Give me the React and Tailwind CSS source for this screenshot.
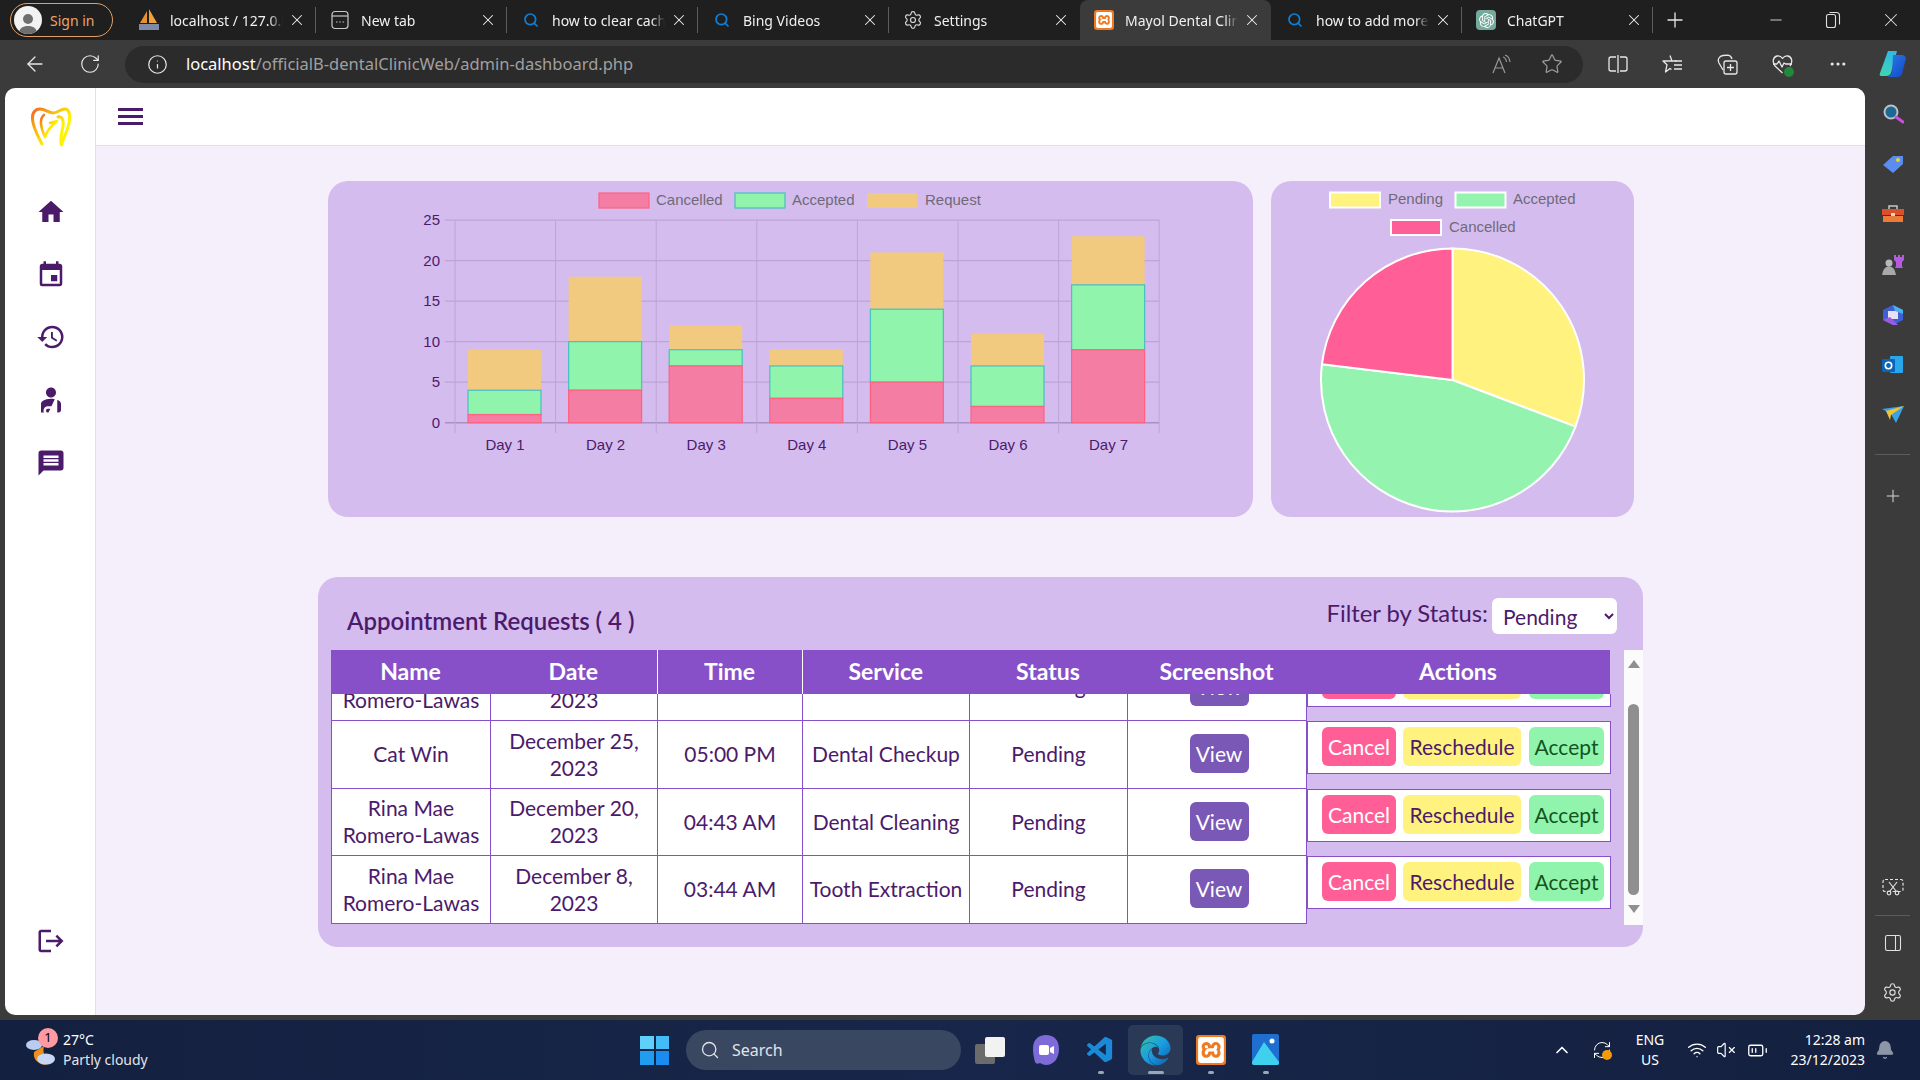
import { ArrowLeft, RotateCw, Info, Star, X, Plus, Search, Settings, Minus, ChevronUp, Wifi, VolumeX, BatteryMedium, RefreshCw, Bell, MoreHorizontal, PanelRight } from 'lucide-react';
import { MdHome, MdEvent, MdHistory, MdPersonalInjury, MdMessage, MdLogout } from 'react-icons/md';
import { SiXampp, SiOpenai } from 'react-icons/si';
import { FaEdge } from 'react-icons/fa';
import { VscVscode } from 'react-icons/vsc';

// ---- browser chrome ----

function PmaIcon() {
  return (
    <svg width="22" height="24" viewBox="0 0 22 24">
      <path d="M2 15 L9 3 L9 15 Z" fill="#e8922e" />
      <path d="M11 1 L19 15 L11 15 Z" fill="#f0a23a" />
      <rect x="1" y="16" width="20" height="6" fill="#7d8aa8" />
    </svg>
  );
}

function NewTabIcon() {
  return (
    <svg width="18" height="20" viewBox="0 0 18 20" fill="none" stroke="#c8c8c8" strokeWidth="1.2">
      <rect x="1" y="1.5" width="16" height="17" rx="3" />
      <path d="M1 6h16" />
      <path d="M5 12h1.5M8.3 12h1.5M11.6 12h1.5" />
    </svg>
  );
}

function BingIcon() {
  return <Search size={16} strokeWidth={2.6} className="text-[#0f7fd6]" />;
}

function XamppIcon({ size = 20 }) {
  return (
    <div className="flex items-center justify-center rounded-[3px] bg-[#ef7a22]" >
      <SiXampp size={size} className="p-[2px] text-white" />
    </div>
  );
}

const tabs = [
  { title: 'localhost / 127.0.0.1', icon: <PmaIcon /> },
  { title: 'New tab', icon: <NewTabIcon /> },
  { title: 'how to clear cache', icon: <BingIcon /> },
  { title: 'Bing Videos', icon: <BingIcon /> },
  { title: 'Settings', icon: <Settings size={20} strokeWidth={1.4} className="text-[#d8d8d8]" /> },
  { title: 'Mayol Dental Clinic', icon: <XamppIcon />, active: true },
  { title: 'how to add more', icon: <BingIcon /> },
  { title: 'ChatGPT', icon: <div className="flex h-[20px] w-[20px] items-center justify-center rounded-[4px] bg-[#74aa9c]"><SiOpenai size={15} className="text-white" /></div> },
];

function Tab({ title, icon, active, hideSep }) {
  return (
    <div className={`relative flex h-[40px] w-[191px] shrink-0 items-center pl-[13px] ${active ? 'rounded-t-[8px] bg-[#3b3b3b]' : ''}`}>
      <div className="flex w-[22px] shrink-0 items-center justify-center">{icon}</div>
      <div className="ml-[10px] w-[113px] overflow-hidden whitespace-nowrap text-[14px] text-[#f0f0f0] [mask-image:linear-gradient(to_right,black_88%,transparent)]">{title}</div>
      <div className="flex w-[28px] justify-center"><X size={18} strokeWidth={1.4} className="text-[#f0f0f0]" /></div>
      {!active && !hideSep && <div className="absolute right-0 top-[7px] h-[26px] w-px bg-[#5c5c5c]" />}
    </div>
  );
}

function RestoreIcon() {
  return (
    <svg width="16" height="18" viewBox="0 0 16 18" fill="none" stroke="#e0e0e0" strokeWidth="1.1">
      <rect x="1.5" y="3.5" width="9" height="13" rx="2" />
      <path d="M4.5 1.5h7a3 3 0 0 1 3 3v9" />
    </svg>
  );
}

function TabStrip() {
  return (
    <div className="flex h-[40px] items-center bg-[#1f1f1f]">
      <div className="ml-[10px] flex h-[34px] w-[103px] items-center rounded-full border border-[#e3a066] pl-[3px]">
        <div className="flex h-[28px] w-[28px] items-end justify-center overflow-hidden rounded-full bg-[#f2f2f2]">
          <svg width="22" height="24" viewBox="0 0 22 24" fill="#6e6e6e"><circle cx="11" cy="9" r="5" /><path d="M2 24c0-6 4-8 9-8s9 2 9 8z" /></svg>
        </div>
        <span className="ml-[8px] text-[14px] text-[#eba46a]">Sign in</span>
      </div>
      <div className="ml-[12px] flex">
        {tabs.map((t, i) => <Tab key={i} {...t} hideSep={i === 4} />)}
      </div>
      <Plus size={24} strokeWidth={1.3} className="ml-[10px] text-[#e8e8e8]" />
      <div className="ml-auto flex items-center">
        <div className="flex w-[57px] justify-center"><Minus size={18} strokeWidth={1.2} className="text-[#e0e0e0]" /></div>
        <div className="flex w-[58px] justify-center"><RestoreIcon /></div>
        <div className="flex w-[58px] justify-center"><X size={22} strokeWidth={1.1} className="text-[#e0e0e0]" /></div>
      </div>
    </div>
  );
}

function ReadAloudIcon() {
  return (
    <svg width="20" height="20" viewBox="0 0 20 20" fill="none" stroke="#9a9a9a" strokeWidth="1.2">
      <path d="M1 19 L7 4 L13 19 M3.2 14h7.6" />
      <path d="M11 3 Q14 4 14.5 8 M13 1 Q17.5 2.5 18 8" />
    </svg>
  );
}

function SplitIcon() {
  return (
    <svg width="20" height="20" viewBox="0 0 20 20" fill="none" stroke="#e8e8e8" strokeWidth="1.3">
      <path d="M8 3H3a2 2 0 0 0-2 2v10a2 2 0 0 0 2 2h5M12 3h5a2 2 0 0 1 2 2v10a2 2 0 0 1-2 2h-5M10 1v18" />
    </svg>
  );
}

function FavoritesIcon() {
  return (
    <svg width="21" height="20" viewBox="0 0 21 20" fill="none" stroke="#e8e8e8" strokeWidth="1.3" strokeLinejoin="round">
      <path d="M8 1.5 L10 7 H14 H1 L5 10.7 L3.5 18 L8 14.5 L9.5 15.5 M14 7" />
      <path d="M13 7h7M12 11h8M12 15h8" />
    </svg>
  );
}

function CollectionsIcon() {
  return (
    <svg width="21" height="21" viewBox="0 0 21 21" fill="none" stroke="#e8e8e8" strokeWidth="1.3">
      <path d="M6 16 L2 9 Q0.6 6 2 4 Q3 1.8 6 1.5 L11 1.2 Q14 1.5 15 5" />
      <rect x="7" y="7" width="13" height="13" rx="2" />
      <path d="M13.5 10v7M10 13.5h7" />
    </svg>
  );
}

function HealthIcon() {
  return (
    <div className="relative">
      <svg width="21" height="21" viewBox="0 0 21 21" fill="none" stroke="#e8e8e8" strokeWidth="1.3" strokeLinejoin="round">
        <path d="M10.5 19 L3 12 C0 8 1 3 5 2 C8 1.5 9.5 3 10.5 4.5 C11.5 3 13 1.5 16 2 C20 3 21 8 18 12" />
        <path d="M1 10h4l2-3 3 6 2-4 1.5 1H20" />
      </svg>
      <div className="absolute -bottom-[2px] -right-[1px] h-[10px] w-[10px] rounded-full bg-[#1f8a3c]" />
    </div>
  );
}

function CopilotIcon() {
  return (
    <svg width="30" height="30" viewBox="0 0 30 30">
      <defs>
        <linearGradient id="cp1" x1="0" y1="0" x2="0" y2="1"><stop offset="0" stopColor="#2fb8e8" /><stop offset="1" stopColor="#3fd6b0" /></linearGradient>
        <linearGradient id="cp2" x1="0" y1="0" x2="1" y2="1"><stop offset="0" stopColor="#2a7de8" /><stop offset="1" stopColor="#1347c8" /></linearGradient>
      </defs>
      <path d="M10 2 H19 L13 24 Q12 27 8 27 H3 Q1 27 2 24 Z" fill="url(#cp1)" />
      <path d="M15 6 H24 Q27 6 28 9 L24 25 Q23 28 20 28 H9 Q13 27 14 23 Z" fill="url(#cp2)" />
    </svg>
  );
}

function ToolbarIcon({ children }) {
  return <div className="flex w-[55px] justify-center">{children}</div>;
}

function Toolbar() {
  return (
    <div className="flex h-[48px] items-center bg-[#3b3b3b] pl-[23px]">
      <ArrowLeft size={24} strokeWidth={1.3} className="text-[#e8e8e8]" />
      <RotateCw size={22} strokeWidth={1.3} className="ml-[32px] text-[#e8e8e8]" />
      <div className="ml-[24px] flex h-[37px] w-[1460px] items-center rounded-full bg-[#2b2b2b] pl-[22px] pr-[20px]">
        <Info size={21} strokeWidth={1.4} className="text-[#e8e8e8]" />
        <div className="ml-[18px] text-[16.5px] text-[#a0a0a0]"><span className="text-white">localhost</span>/officialB-dentalClinicWeb/admin-dashboard.php</div>
        <div className="ml-auto flex items-center gap-[29px]">
          <ReadAloudIcon />
          <Star size={22} strokeWidth={1.3} className="text-[#a0a0a0]" />
        </div>
      </div>
      <div className="ml-[7px] flex items-center text-[#e8e8e8]">
        <ToolbarIcon><SplitIcon /></ToolbarIcon>
        <ToolbarIcon><FavoritesIcon /></ToolbarIcon>
        <ToolbarIcon><CollectionsIcon /></ToolbarIcon>
        <ToolbarIcon><HealthIcon /></ToolbarIcon>
        <ToolbarIcon><MoreHorizontal size={20} strokeWidth={1.8} /></ToolbarIcon>
        <ToolbarIcon><CopilotIcon /></ToolbarIcon>
      </div>
    </div>
  );
}

// ---- right edge sidebar ----

function EdgeBarItem({ children }) {
  return <div className="flex h-[50.2px] items-center justify-center">{children}</div>;
}

function EdgeBar() {
  return (
    <div className="flex w-[55px] shrink-0 flex-col items-center bg-[#3b3b3b] pt-[1px]">
      <EdgeBarItem>
        <svg width="22" height="22" viewBox="0 0 22 22" fill="none"><circle cx="9" cy="9" r="6.5" fill="#1c6a94" stroke="#b9c2c9" strokeWidth="2" /><path d="M14 14l7 5" stroke="#c94fd8" strokeWidth="3" strokeLinecap="round" /></svg>
      </EdgeBarItem>
      <EdgeBarItem>
        <svg width="22" height="20" viewBox="0 0 22 20"><path d="M1 11 L11 2 H21 V10 L11 19 Z" fill="#5b8df0" /><circle cx="16" cy="6" r="2" fill="#f2d21f" /></svg>
      </EdgeBarItem>
      <EdgeBarItem>
        <svg width="22" height="20" viewBox="0 0 22 20"><path d="M7 5V2h8v3" fill="none" stroke="#c8c8c8" strokeWidth="1.5" /><rect x="0" y="5" width="22" height="6" fill="#d9502a" /><rect x="1" y="12" width="20" height="6" fill="#ee7a3a" /><rect x="9" y="9" width="4" height="3" fill="#e8d5c8" /></svg>
      </EdgeBarItem>
      <EdgeBarItem>
        <svg width="24" height="22" viewBox="0 0 24 22"><path d="M13 1h2v2h2V1h2v2h2V1h2v5l-2 2v4l1 2H14l1-2V8l-2-2z" fill="#b45be0" /><circle cx="8" cy="9" r="3.5" fill="#b8b8b8" /><path d="M1 21 Q2 13 8 12 Q14 13 15 21 Z" fill="#a8a8a8" /></svg>
      </EdgeBarItem>
      <EdgeBarItem>
        <svg width="22" height="22" viewBox="0 0 22 22"><path d="M1 6 L11 1 L21 6 L21 16 L11 21 L1 16 Z" fill="#3f5fd8" /><path d="M6 7 L16 7 L16 15 L6 15 Z" fill="#e7e1f2" /><path d="M11 1 L21 6 L21 10 L13 7 Z" fill="#49b2e8" /><path d="M1 16 L8 13 L16 21 L11 21 Z" fill="#9a5be0" /></svg>
      </EdgeBarItem>
      <EdgeBarItem>
        <svg width="22" height="20" viewBox="0 0 22 20"><rect x="8" y="1" width="13" height="17" rx="1" fill="#28a8ea" /><rect x="0" y="4" width="13" height="13" rx="1" fill="#0a64b8" /><circle cx="6.5" cy="10.5" r="3.2" fill="none" stroke="#fff" strokeWidth="1.6" /></svg>
      </EdgeBarItem>
      <EdgeBarItem>
        <svg width="22" height="18" viewBox="0 0 22 18"><path d="M0 3 L22 0 L14 17 L9 8 Z" fill="#3aa3e8" /><path d="M4 5 L22 0 L9 9 L8 14 Z" fill="#f2c230" /></svg>
      </EdgeBarItem>
      <div className="mt-[14px] h-px w-[35px] bg-[#5c5c5c]" />
      <Plus size={20} strokeWidth={1.2} className="mt-[31px] text-[#d8d8d8]" />
      <div className="mt-auto flex flex-col items-center pb-[12px] text-[#e0e0e0]">
        <svg width="22" height="18" viewBox="0 0 22 18" fill="none" stroke="#e0e0e0" strokeWidth="1.2">
          <rect x="1" y="1.5" width="20" height="12" rx="2" strokeDasharray="3 2" />
          <path d="M7 4l7 9M15 4l-7 9" />
          <circle cx="7" cy="15" r="1.8" />
          <circle cx="15" cy="15" r="1.8" />
        </svg>
        <div className="mb-[17px] mt-[19px] h-px w-[35px] bg-[#5c5c5c]" />
        <PanelRight size={20} strokeWidth={1.3} />
        <Settings size={21} strokeWidth={1.3} className="mt-[29px]" />
      </div>
    </div>
  );
}

// ---- dashboard sidebar ----

function ToothLogo() {
  return (
    <svg width="42" height="42" viewBox="0 0 42 42" fill="none">
      <defs>
        <linearGradient id="tooth" x1="0" y1="0" x2="0.9" y2="0.8">
          <stop offset="0" stopColor="#f26a21" />
          <stop offset="0.4" stopColor="#fbb90f" />
          <stop offset="0.75" stopColor="#fff200" />
        </linearGradient>
      </defs>
      <g stroke="url(#tooth)" strokeLinejoin="round" strokeLinecap="round">
        {/* outer outline */}
        <path strokeWidth="3" d="M12 38 C8 30 3 22 2.5 13 C2 7 5 3 10 3 C15 3 19 7 23 7 C27 7 31 3 35 3 C39 3 40 8 39.5 14 C39 22 34 30 31.5 39 C29.5 34 32 26 33 20 C34 14 32 10 28 11" />
        {/* inner swoosh */}
        <path strokeWidth="2.6" d="M14 9 C9 13 11 22 15 31 C17 25 21 20 27 15 L20 17" />
      </g>
    </svg>
  );
}

function Sidebar() {
  return (
    <aside className="flex w-[91px] shrink-0 flex-col items-center border-r border-[#e3dfe8] bg-white pb-[59px] pl-px pt-[18px] text-[#4b1a6b]">
      <ToothLogo />
      <nav className="mt-[49px] flex flex-col items-center gap-[32.7px]">
        <MdHome size={30} />
        <MdEvent size={30} />
        <MdHistory size={30} />
        <MdPersonalInjury size={30} />
        <MdMessage size={30} />
      </nav>
      <MdLogout size={30} className="mt-auto" />
    </aside>
  );
}

function TopBar() {
  return (
    <div className="flex h-[58px] shrink-0 items-start border-b border-[#e3dfe8] bg-white pl-[22px] pt-[20px]">
      <div className="flex w-[25px] flex-col gap-[4px]">
        <div className="h-[3px] bg-[#4b1a6b]" />
        <div className="h-[3px] bg-[#4b1a6b]" />
        <div className="h-[3px] bg-[#4b1a6b]" />
      </div>
    </div>
  );
}

// ---- charts ----

const cancelled = [1, 4, 7, 3, 5, 2, 9];
const accepted = [3, 6, 2, 4, 9, 5, 8];
const requested = [5, 8, 3, 2, 7, 4, 6];
const barLeft = 455;
const barStep = 100.6;
const axisTop = 220;
const axisBottom = 422.7;
const unit = (axisBottom - axisTop) / 25;

function BarChart() {
  const gridY = [25, 20, 15, 10, 5, 0];
  const colX = [0, 1, 2, 3, 4, 5, 6, 7].map((i) => barLeft + i * barStep);
  return (
    <div className="h-[336px] w-[925px] rounded-[20px] bg-[#d4bdee]">
      <svg width="925" height="336" viewBox="328 181 925 336" fontFamily="'Liberation Sans', Arial, sans-serif" fontSize="15">
        {/* legend */}
        <rect x="599" y="193" width="50" height="15" fill="#f47da3" stroke="#ff6384" strokeWidth="1.25" />
        <text x="656" y="205" fill="#6f6a78">Cancelled</text>
        <rect x="735" y="193" width="50" height="15" fill="#90f4ac" stroke="#4bc0c0" strokeWidth="1.25" />
        <text x="792" y="205" fill="#6f6a78">Accepted</text>
        <rect x="867" y="193" width="50" height="15" fill="#f1c97f" />
        <text x="925" y="205" fill="#6f6a78">Request</text>

        {/* grid */}
        {gridY.map((v) => {
          const y = axisBottom - v * unit;
          return (
            <g key={v}>
              <line x1="445" x2={colX[7]} y1={y} y2={y} stroke={v === 0 ? '#a88fc4' : '#bda4d6'} strokeWidth={v === 0 ? 1.5 : 1.25} />
              <text x="440" y={y + 5} textAnchor="end" fill="#4b1a6b">{v}</text>
            </g>
          );
        })}
        {colX.map((x) => (
          <line key={x} x1={x} x2={x} y1={axisTop} y2="433" stroke="#bda4d6" strokeWidth="1" />
        ))}

        {/* stacked bars */}
        {cancelled.map((c, i) => {
          const a = accepted[i];
          const r = requested[i];
          const x = barLeft + i * barStep + 13;
          const yC = axisBottom - c * unit;
          const yA = yC - a * unit;
          const yR = yA - r * unit;
          return (
            <g key={i}>
              <rect x={x} y={yR} width="73" height={r * unit} fill="#f1c97f" />
              <rect x={x} y={yA} width="73" height={a * unit} fill="#90f4ac" stroke="#4bc0c0" strokeWidth="1.25" />
              <rect x={x} y={yC} width="73" height={c * unit} fill="#f47da3" stroke="#ff6384" strokeWidth="1.25" />
              <text x={x + 37} y="450" textAnchor="middle" fill="#4b1a6b">{`Day ${i + 1}`}</text>
            </g>
          );
        })}
      </svg>
    </div>
  );
}

function pieSlice(cx, cy, r, from, to) {
  const point = (deg) => {
    const a = ((deg - 90) * Math.PI) / 180;
    return `${cx + r * Math.cos(a)} ${cy + r * Math.sin(a)}`;
  };
  const large = to - from > 180 ? 1 : 0;
  return `M${cx} ${cy} L${point(from)} A${r} ${r} 0 ${large} 1 ${point(to)} Z`;
}

function PieChart() {
  return (
    <div className="h-[336px] w-[363px] rounded-[20px] bg-[#d4bdee]">
      <svg width="363" height="336" viewBox="1271 181 363 336" fontFamily="'Liberation Sans', Arial, sans-serif" fontSize="15">
        <rect x="1330" y="192.5" width="50" height="15" fill="#fff27e" stroke="#fff" strokeWidth="2" />
        <text x="1388" y="204" fill="#6f6a78">Pending</text>
        <rect x="1455.5" y="192.5" width="50" height="15" fill="#94f4af" stroke="#fff" strokeWidth="2" />
        <text x="1513" y="204" fill="#6f6a78">Accepted</text>
        <rect x="1391" y="220" width="50" height="15" fill="#ff5f96" stroke="#fff" strokeWidth="2" />
        <text x="1449" y="232" fill="#6f6a78">Cancelled</text>
        <path d={pieSlice(1452.5, 380, 131.5, 0, 110.77)} fill="#fff27e" stroke="#fff" strokeWidth="2" />
        <path d={pieSlice(1452.5, 380, 131.5, 110.77, 276.92)} fill="#94f4af" stroke="#fff" strokeWidth="2" />
        <path d={pieSlice(1452.5, 380, 131.5, 276.92, 360)} fill="#ff5f96" stroke="#fff" strokeWidth="2" />
      </svg>
    </div>
  );
}

// ---- appointment table ----

// lift = extra bottom padding so single-line cells of the half-hidden top row stay behind the header
const rows = [
  { name: 'Rina Mae Romero-Lawas', date: 'December 28, 2023', time: '02:00 PM', service: 'Tooth Extraction', h: 'h-[67px]', lift: 'pb-[9px]', statusLift: 'pb-[4px]' },
  { name: 'Cat Win', date: 'December 25, 2023', time: '05:00 PM', service: 'Dental Checkup', h: 'h-[68px]', lift: 'pb-[2px]', statusLift: 'pb-[2px]' },
  { name: 'Rina Mae Romero-Lawas', date: 'December 20, 2023', time: '04:43 AM', service: 'Dental Cleaning', h: 'h-[67px]', lift: 'pb-[2px]', statusLift: 'pb-[2px]' },
  { name: 'Rina Mae Romero-Lawas', date: 'December 8, 2023', time: '03:44 AM', service: 'Tooth Extraction', h: 'h-[68px]', lift: 'pb-[2px]', statusLift: 'pb-[2px]' },
];

function Cols() {
  return (
    <colgroup>
      <col className="w-[159px]" />
      <col className="w-[167px]" />
      <col className="w-[145px]" />
      <col className="w-[167px]" />
      <col className="w-[158px]" />
      <col className="w-[179px]" />
      <col className="w-[304px]" />
    </colgroup>
  );
}

function RowActions() {
  return (
    <div className="flex h-[53px] w-[304px] items-center border border-[#8750c8] bg-white pb-[1px] pl-[14px] text-[21px]">
      <button className="h-[39px] w-[74px] rounded-[6px] bg-[#ff5f96] text-white">Cancel</button>
      <button className="ml-[7px] h-[39px] w-[118px] rounded-[6px] bg-[#fff27e] text-[#4b1a6b]">Reschedule</button>
      <button className="ml-[8px] h-[39px] w-[75px] rounded-[6px] bg-[#90f4ac] text-[#14541f]">Accept</button>
    </div>
  );
}

function AppointmentTable() {
  const cell = 'border border-[#8750c8] bg-white px-[2px] text-center leading-[27px]';
  return (
    <div className="flex h-[275px]">
      <div className="w-[1280px]">
        <table className="w-[1279px] table-fixed border-collapse">
          <Cols />
          <thead>
            <tr className="h-[44px] bg-[#8750c8] text-[23px] text-white">
              <th className="pb-[2px] font-bold">Name</th>
              <th className="border-r border-white pb-[2px] font-bold">Date</th>
              <th className="border-r border-white pb-[2px] font-bold">Time</th>
              <th className="pb-[2px] font-bold">Service</th>
              <th className="pb-[2px] font-bold">Status</th>
              <th className="pb-[2px] font-bold">Screenshot</th>
              <th className="pb-[2px] font-bold">Actions</th>
            </tr>
          </thead>
        </table>
        <div className="h-[231px] overflow-hidden">
          <table className="-mt-[41px] w-[1279px] table-fixed border-collapse text-[21px]">
            <Cols />
            <tbody>
              {rows.map((r, i) => (
                <tr key={i} className={r.h}>
                  <td className={`${cell} pb-[2px]`}>{r.name}</td>
                  <td className={`${cell} pb-[2px]`}>{r.date}</td>
                  <td className={`${cell} ${r.lift}`}>{r.time}</td>
                  <td className={`${cell} ${r.lift}`}>{r.service}</td>
                  <td className={`${cell} ${r.statusLift}`}>Pending</td>
                  <td className={`${cell} pb-[2px] pl-[6px]`}>
                    <button className="h-[39px] w-[59px] rounded-[6px] bg-[#7a58b5] text-white">View</button>
                  </td>
                  <td className="align-top"><RowActions /></td>
                </tr>
              ))}
            </tbody>
          </table>
        </div>
      </div>
      <div className="ml-[13px] flex w-[19px] flex-col items-center bg-[#fbfbfb] pt-[10px]">
        <div className="h-0 w-0 border-x-[6px] border-b-[8px] border-x-transparent border-b-[#8f8f8f]" />
        <div className="mt-[36px] h-[191px] w-[11px] rounded-full bg-[#8f8f8f]" />
        <div className="mt-[10px] h-0 w-0 border-x-[6px] border-t-[8px] border-x-transparent border-t-[#8f8f8f]" />
      </div>
    </div>
  );
}

function AppointmentCard() {
  return (
    <section className="mt-[60px] h-[370px] w-[1325px] rounded-[20px] bg-[#d4bdee] pl-[13px]">
      <div className="flex h-[73px] items-start justify-between pl-[16px] pr-[26px] pt-[21px]">
        <h2 className="mt-[5px] text-[24px] font-semibold">Appointment Requests ( 4 )</h2>
        <div className="flex items-center gap-[4px]">
          <label className="-mt-[5px] text-[23.8px]">Filter by Status:</label>
          <select className="h-[36px] w-[125px] rounded-[6px] bg-white pl-[7px] text-[21px]" defaultValue="Pending">
            <option>Pending</option>
            <option>Accepted</option>
            <option>Cancelled</option>
          </select>
        </div>
      </div>
      <AppointmentTable />
    </section>
  );
}

// ---- windows taskbar ----

function WeatherIcon() {
  return (
    <svg width="34" height="36" viewBox="0 0 34 36">
      <path d="M10 20 A11 11 0 0 0 28 30 A13 13 0 0 1 20 14 Z" fill="#ef8f1f" />
      <ellipse cx="10" cy="13" rx="8" ry="5" fill="#b9cdf0" />
      <ellipse cx="22" cy="27" rx="9" ry="5.5" fill="#c6d8f5" />
    </svg>
  );
}

function WindowsLogo() {
  return (
    <div className="grid h-[29px] w-[29px] grid-cols-2 gap-[2px]">
      <div className="bg-[#5fd0fb]" />
      <div className="bg-[#43bcf8]" />
      <div className="bg-[#1f9df0]" />
      <div className="bg-[#1a8cf0]" />
    </div>
  );
}

function TaskIcon({ children, active, dot }) {
  return (
    <div className={`relative flex h-[50px] w-[55px] items-center justify-center rounded-[5px] ${active ? 'bg-[#2a3a56]' : ''}`}>
      {children}
      {dot && <div className={`absolute bottom-[1px] h-[3px] rounded-full bg-[#9aa5b5] ${active ? 'w-[16px]' : 'w-[6px]'}`} />}
    </div>
  );
}

function Taskbar() {
  return (
    <div className="flex h-[60px] shrink-0 items-center bg-gradient-to-r from-[#14203f] via-[#17264a] to-[#14203f] text-white">
      <div className="relative flex w-[640px] shrink-0 items-center pl-[24px]">
        <WeatherIcon />
        <div className="ml-[5px] text-[14px] leading-[20px]">
          <div>27°C</div>
          <div className="text-[#e0e4ea]">Partly cloudy</div>
        </div>
        <div className="absolute left-[38px] -top-[2px] flex h-[20px] w-[20px] items-center justify-center rounded-full bg-[#ff9aa2] text-[13px] text-black">1</div>
      </div>
      <WindowsLogo />
      <div className="ml-[17px] flex h-[40px] w-[275px] items-center rounded-full bg-[#3a4760] pl-[14px] text-[16px] text-[#e0e4ea]">
        <Search size={20} strokeWidth={1.6} />
        <span className="ml-[12px]">Search</span>
      </div>
      <div className="ml-[2px] flex items-center">
        <TaskIcon>
          <div className="relative h-[27px] w-[31px]">
            <div className="absolute bottom-0 left-0 h-[20px] w-[20px] rounded-[2px] bg-[#6b6b6b]" />
            <div className="absolute right-[1px] top-0 h-[20px] w-[20px] rounded-[2px] bg-[#f2f2f2]" />
          </div>
        </TaskIcon>
        <TaskIcon>
          <svg width="30" height="32" viewBox="0 0 30 32"><path d="M15 1C7 1 2 6 2 15c0 5 1 9 2 13 1 2 3 2 5 1 2 1 4 2 6 2 8 0 13-7 13-16S23 1 15 1z" fill="#7f6bd8" /><rect x="8" y="11" width="10" height="10" rx="2" fill="#fff" /><path d="M19 14l4-2v8l-4-2z" fill="#fff" /></svg>
        </TaskIcon>
        <TaskIcon dot><VscVscode size={31} className="text-[#1a8ad6]" /></TaskIcon>
        <TaskIcon active dot>
          <svg width="0" height="0" className="absolute">
            <defs><linearGradient id="edge" x1="0" y1="0" x2="1" y2="1"><stop offset="0" stopColor="#35c1a0" /><stop offset="0.5" stopColor="#1b9de2" /><stop offset="1" stopColor="#0c59a4" /></linearGradient></defs>
          </svg>
          <FaEdge size={31} className="fill-[url(#edge)]" />
        </TaskIcon>
        <TaskIcon dot><XamppIcon size={30} /></TaskIcon>
        <TaskIcon dot>
          <svg width="28" height="32" viewBox="0 0 28 32"><rect width="27" height="31" rx="2" fill="#1f6fd0" /><circle cx="20" cy="7" r="2.5" fill="#fff" /><path d="M0 28 L12 8 L27 28 V29 Q27 31 25 31 H2 Q0 31 0 29 Z" fill="#3fd0f0" /></svg>
        </TaskIcon>
      </div>
      <div className="ml-auto flex items-center pr-[25px]">
        <ChevronUp size={20} strokeWidth={2} />
        <div className="relative ml-[20px]">
          <RefreshCw size={20} strokeWidth={1.2} />
          <div className="absolute bottom-0 right-0 h-[10px] w-[10px] rounded-full bg-[#f59a0c]" />
        </div>
        <div className="ml-[19px] w-[38px] text-center text-[14px] leading-[20px]"><div>ENG</div><div>US</div></div>
        <Wifi size={20} strokeWidth={1.6} className="ml-[18px]" />
        <VolumeX size={20} strokeWidth={1.4} className="ml-[9px]" />
        <BatteryMedium size={21} strokeWidth={1.5} className="ml-[11px]" />
        <div className="ml-[7px] w-[90px] text-right text-[14px] leading-[20px]"><div>12:28 am</div><div>23/12/2023</div></div>
        <Bell size={20} strokeWidth={1.5} className="ml-[10px] fill-[#8d96a6] text-[#8d96a6]" />
      </div>
    </div>
  );
}

export default function App() {
  return (
    <div className="flex h-screen w-[1920px] flex-col overflow-hidden bg-[#3b3b3b] font-['Noto_Sans',sans-serif]">
      <TabStrip />
      <Toolbar />
      <div className="flex h-[927px] pl-[5px]">
        <div className="flex w-[1860px] overflow-hidden rounded-[10px] font-['Lato',sans-serif] text-[#4b1a6b]">
          <Sidebar />
          <div className="flex flex-1 flex-col bg-[#f4effb]">
            <TopBar />
            <main className="flex flex-col items-center pt-[35px]">
              <div className="flex gap-[18px]">
                <BarChart />
                <PieChart />
              </div>
              <AppointmentCard />
            </main>
          </div>
        </div>
        <EdgeBar />
      </div>
      <div className="h-[5px] shrink-0" />
      <Taskbar />
    </div>
  );
}
